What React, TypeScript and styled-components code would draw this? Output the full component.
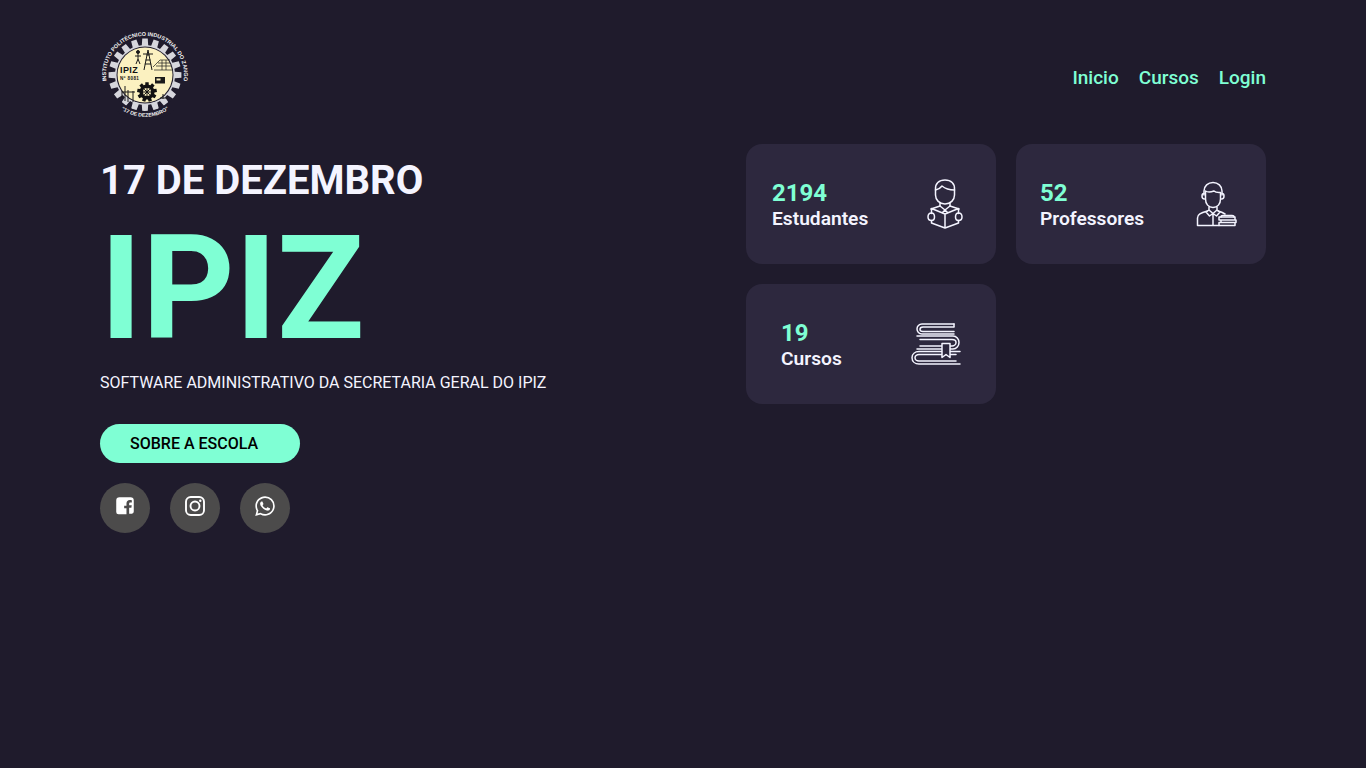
import React from "react";
import styled, { createGlobalStyle } from "styled-components";
import { BiLogoWhatsapp } from "react-icons/bi";

const Global = createGlobalStyle`
  html, body { margin: 0; padding: 0; background: #1f1b2c; }
  body { font-family: Roboto, "Liberation Sans", sans-serif; color: #f4f4ff; }
`;

const Page = styled.div`
  width: 1366px;
  height: 768px;
  padding: 0 100px;
  box-sizing: border-box;
  background: #1f1b2c;
  overflow: hidden;
`;
const Header = styled.header`
  height: 144px;
  display: flex;
  align-items: flex-start;
  justify-content: space-between;
`;
const LogoWrap = styled.div`
  width: 90px;
  height: 90px;
  margin-top: 30px;
`;
const Nav = styled.nav`
  display: flex;
  gap: 20px;
  margin-top: 67px;
`;
const NavLink = styled.a`
  color: #7fffd4;
  font-size: 19px;
  line-height: 22px;
  font-weight: 500;
`;
const Main = styled.main`
  display: flex;
  justify-content: space-between;
`;
const Left = styled.section`
  display: flex;
  flex-direction: column;
  align-items: flex-start;
`;
const Date = styled.h2`
  margin: 13px 0 0 0;
  font-size: 40px;
  line-height: 47px;
  font-weight: 700;
  color: #f4f4ff;
`;
const Title = styled.h1`
  margin: 0;
  font-size: 144px;
  line-height: 169px;
  font-weight: 700;
  color: #7fffd4;
`;
const Subtitle = styled.p`
  margin: 0;
  font-size: 16px;
  line-height: 19px;
  color: #f4f4ff;
`;
const Cta = styled.a`
  margin-top: 32px;
  width: 200px;
  height: 39px;
  box-sizing: border-box;
  padding-left: 30px;
  display: flex;
  align-items: center;
  background: #7fffd4;
  border-radius: 20px;
  color: #000;
  font-size: 16px;
  font-weight: 500;
`;
const Socials = styled.div`
  margin-top: 20px;
  display: flex;
  gap: 20px;
`;
const Social = styled.a`
  width: 50px;
  height: 50px;
  border-radius: 50%;
  background: #4c4b4b;
  color: #fff;
  display: flex;
  align-items: center;
  justify-content: center;
  padding-bottom: 5px;
  box-sizing: border-box;
  font-size: 26px;
`;
const Grid = styled.section`
  display: grid;
  grid-template-columns: 250px 250px;
  grid-auto-rows: 120px;
  gap: 20px;
`;
const Card = styled.div<{ $pad: number; $right: number }>`
  background: #2d283e;
  border-radius: 16px;
  display: flex;
  align-items: center;
  justify-content: space-between;
  padding: 0 ${(p) => p.$right}px 0 ${(p) => p.$pad}px;
  box-sizing: border-box;
`;
const Stat = styled.div`
  display: flex;
  flex-direction: column;
  padding-top: 1px;
`;
const Num = styled.span`
  color: #7fffd4;
  font-size: 24px;
  line-height: 28px;
  font-weight: 700;
`;
const Label = styled.span`
  color: #f4f4ff;
  font-size: 19.2px;
  line-height: 22px;
  font-weight: 600;
  margin-top: 1px;
`;
const Icon = styled.svg`
  display: block;
  fill: none;
  stroke: #f4f4ff;
  stroke-width: 1.5;
  stroke-linecap: round;
  stroke-linejoin: round;
`;

function gearPath(cx: number, cy: number, root: number, tip: number, teeth: number) {
  let d = "";
  for (let i = 0; i < teeth; i++) {
    const a = (i / teeth) * Math.PI * 2;
    const w = Math.PI / teeth;
    const pts: [number, number][] = [
      [root, a - w * 0.68],
      [tip, a - w * 0.48],
      [tip, a + w * 0.48],
      [root, a + w * 0.68],
    ];
    pts.forEach(([r, t], j) => {
      d += `${i === 0 && j === 0 ? "M" : "L"}${(cx + r * Math.sin(t)).toFixed(2)} ${(cy - r * Math.cos(t)).toFixed(2)}`;
    });
  }
  return d + "Z";
}

const Logo = () => (
  <svg width="90" height="90" viewBox="0 0 90 90">
    <defs>
      <path id="arcTop" d="M8.400 58.300 A39 39 0 1 1 81.600 58.300" />
      <path id="arcBottom" d="M20.500 79 A42 42 0 0 0 69.500 79" />
    </defs>
    <path d={gearPath(45, 45, 30, 36.500, 20)} fill="#d6d6dc" />
    <path d="M17 74.500 A40 40 0 0 0 73 74.500" fill="none" stroke="#1f1b2c" strokeWidth="10" />
    <circle cx="45" cy="45" r="28.500" fill="#1f1b2c" />
    <circle cx="45" cy="45" r="27.500" fill="#fbf1c0" />
    <g stroke="#1a1a1a" fill="none" strokeWidth="1">
      <path d="M48 20L44 40M48 20L52 40M45.500 30H50.500M44.800 34H51.200M46.500 25H49.500M43 24H53" />
      <circle cx="38" cy="22" r="1.500" fill="#1a1a1a" />
      <path d="M38 23.500V29M35 26H41M38 29L36 34M38 29L40 34" />
      <path d="M53 37L60 30H70M54 40H73M56 36H71M58 33H70M62 30V40M66 30V40" strokeWidth=".7" />
      <path d="M22 61V68M25 56V71M28 60V72M33 61V72M22 62H35M63 64V69M60 68H68" />
    </g>
    <rect x="55" y="47" width="10" height="6.500" fill="#1a1a1a" />
    <rect x="56.500" y="48.500" width="4" height="2" fill="#fbf1c0" />
    <path d={gearPath(47, 62, 7.500, 10, 9)} fill="#111" />
    <circle cx="47" cy="62" r="4" fill="#fbf1c0" />
    <path d="M47 58V66M43 62H51M44.200 59.200L49.800 64.800M49.800 59.200L44.200 64.800" stroke="#111" strokeWidth="1" />
    <text x="20" y="42.500" fontFamily="Liberation Sans, sans-serif" fontWeight="700" fontSize="9" letterSpacing=".4" fill="#111">IPIZ</text>
    <text x="20" y="50" fontFamily="Liberation Sans, sans-serif" fontWeight="700" fontSize="4.600" letterSpacing=".4" fill="#111">Nº 8081</text>
    <text fontFamily="Liberation Sans, sans-serif" fontWeight="700" fontSize="5.500" fill="#f4f4f4" textAnchor="middle">
      <textPath href="#arcTop" startOffset="50%">INSTITUTO POLITÉCNICO INDUSTRIAL DO ZANGO</textPath>
    </text>
    <text fontFamily="Liberation Sans, sans-serif" fontWeight="700" fontSize="5.200" fill="#f4f4f4" textAnchor="middle">
      <textPath href="#arcBottom" startOffset="50%">"17 DE DEZEMBRO"</textPath>
    </text>
  </svg>
);

const FacebookIcon = () => (
  <svg width="24" height="24" viewBox="0 0 26 26">
    <path
      fill="#fff"
      fillRule="evenodd"
      d="M7 3.500h12a3.500 3.500 0 0 1 3.500 3.500v12a2.500 2.500 0 0 1-2 2.500H17.500v-6.500h2.400l.4-2.800h-2.800v-1.700c0-.9.400-1.300 1.300-1.300h1.600V6.800c-.5-.1-1.300-.2-2.200-.2-2.200 0-3.600 1.300-3.600 3.700v2.400h-2.500v2.800h2.500v6.500H6a2.500 2.500 0 0 1-2.500-2.500V7A3.500 3.500 0 0 1 7 3.500Z"
    />
  </svg>
);

const InstagramIcon = () => (
  <svg width="26" height="26" viewBox="0 0 26 26" fill="none" stroke="#fff" strokeWidth="1.9">
    <rect x="4" y="4" width="18" height="18" rx="4.800" />
    <circle cx="13" cy="13" r="4.500" />
    <circle cx="18.300" cy="7.700" r="1.200" fill="#fff" stroke="none" />
  </svg>
);

const StudentIcon = () => (
  <Icon width="36" height="50" viewBox="0 0 36 50">
    <path d="M8.500 10.500C8 4.500 12 1 18 1s10 3.500 9.500 9.500V16c0 5-4 9-9.500 9s-9.500-4-9.500-9Z" />
    <path d="M8.500 11c3-.5 5-2 6.500-4 3 2.500 7.500 4 12.500 4" />
    <path d="M13 24v3l5 4 5-4v-3" />
    <path d="M13 27l-9 3M23 27l9 3M18 31l-2.500 2.500M18 31l2.500 2.500" />
    <path d="M18 35L4.500 29.500v5M18 35l13.500-5.500v5M18 35v14M4.500 41.500V44L18 49l13.500-5v-2.500" />
    <path d="M4.500 34C2 34 1 36 1 38s1 3.500 3.500 3.500c2 0 3-1.500 3-3.500s-1-4-3-4ZM31.500 34c-2 0-3 2-3 4s1 3.500 3 3.500c2.500 0 3.500-1.500 3.500-3.500s-1-4-3.500-4Z" />
  </Icon>
);

const TeacherIcon = () => (
  <Icon width="42" height="46" viewBox="0 0 42 46">
    <path d="M8 14V10C8 5 12 1.500 17 1.500S26 5 26 10v4" />
    <path d="M8 12.500c-1.500 0-2 1-2 2.500s1 3 2.500 3M26 12.500c1.500 0 2 1 2 2.500s-1 3-2.500 3" />
    <path d="M9.500 10c0 0 3 2 8.500 0 2 2 5 1.500 6.500 1.500v6.500c0 5-3 8.500-7.500 8.500S9.500 23 9.500 18Z" />
    <path d="M13 26v3l4 3.500 4-3.500v-3M17 32.500V44M13 29l-3 2 3.500 4 3.500-2.500M21 29l3 2-3.500 4-3.500-2.500" />
    <path d="M1.500 44.500V37c0-3.500 3-5 10-7M22 30c3 .8 5 1.700 7 3M1.500 44.500H23" />
    <path d="M23 36h16v3H23ZM25 39h15v2.500H25ZM23 41.500h16v3H23Z" />
    <path d="M25 36c0-1 1-1.500 2-1.500h9c1 0 2 .5 2 1.500" />
  </Icon>
);

const BooksIcon = () => (
  <Icon width="50" height="42" viewBox="0 0 50 42">
    <path d="M43 1H11C8 1 6 3.500 6 6s2 5 5 5h32" />
    <path d="M43 4H12C10.500 4 9 5 9 6.500S10.500 8.500 12 8.500h31" />
    <path d="M43 1v2.500M6 13h36c3.500 0 6 3 6 6.500S45.500 26 42 26H6" />
    <path d="M9 16.500h32c2 0 4 1 4 3s-2 3.500-4 3.500h-2M9 23h22" />
    <path d="M49 28.500H8c-4 0-7 2.500-7 6.250S4 41 8 41h41" />
    <path d="M45 31.500H8c-2 0-4 1.250-4 3.250S6 38 8 38h37" />
    <path d="M31 20.500v14l4-3 4 3v-14Z" fill="#2d283e" />
  </Icon>
);

export default function App() {
  return (
    <Page>
      <Global />
      <Header>
        <LogoWrap><Logo /></LogoWrap>
        <Nav>
          <NavLink>Inicio</NavLink>
          <NavLink>Cursos</NavLink>
          <NavLink>Login</NavLink>
        </Nav>
      </Header>
      <Main>
        <Left>
          <Date>17 DE DEZEMBRO</Date>
          <Title>IPIZ</Title>
          <Subtitle>SOFTWARE ADMINISTRATIVO DA SECRETARIA GERAL DO IPIZ</Subtitle>
          <Cta>SOBRE A ESCOLA</Cta>
          <Socials>
            <Social><FacebookIcon /></Social>
            <Social><InstagramIcon /></Social>
            <Social><BiLogoWhatsapp /></Social>
          </Socials>
        </Left>
        <Grid>
          <Card $pad={26} $right={33}>
            <Stat><Num>2194</Num><Label>Estudantes</Label></Stat>
            <StudentIcon />
          </Card>
          <Card $pad={24} $right={28}>
            <Stat><Num>52</Num><Label>Professores</Label></Stat>
            <TeacherIcon />
          </Card>
          <Card $pad={35} $right={35}>
            <Stat><Num>19</Num><Label>Cursos</Label></Stat>
            <BooksIcon />
          </Card>
        </Grid>
      </Main>
    </Page>
  );
}
